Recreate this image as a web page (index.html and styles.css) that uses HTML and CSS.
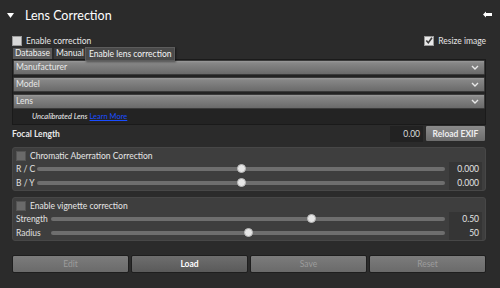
FILE: index.html
```html
<!DOCTYPE html>
<html>
<head>
<meta charset="utf-8">
<link rel="stylesheet" href="styles.css">
</head>
<body>
<div class="panel">
  <header class="title">
    <svg class="caret" width="7" height="5" viewBox="0 0 7 5"><polygon points="0,0 7,0 3.5,5" fill="#fff"/></svg>
    <span class="title-text">Lens Correction</span>
    <svg class="pin" width="9" height="7" viewBox="0 0 9 7"><polygon points="0,3.5 3,0.5 3,2 9,2 9,5 3,5 3,6.5" fill="#fff"/></svg>
  </header>

  <div class="opts">
    <label class="check"><span class="box"></span>Enable correction</label>
    <label class="check"><span class="box on"><svg width="9" height="9" viewBox="0 0 9 9"><polyline points="1.5,4.5 3.7,7 7.8,1.5" fill="none" stroke="#3a3a3a" stroke-width="1.8"/></svg></span>Resize image</label>
  </div>

  <div class="tabs">
    <span class="tab active">Database</span>
    <span class="tab">Manual</span>
    <span class="tooltip">Enable lens correction</span>
  </div>

  <div class="db">
    <div class="select"><span>Manufacturer</span><svg width="8" height="5" viewBox="0 0 8 5"><polyline points="1,1 4,4 7,1" fill="none" stroke="#e8e8e8" stroke-width="1.4"/></svg></div>
    <div class="select"><span>Model</span><svg width="8" height="5" viewBox="0 0 8 5"><polyline points="1,1 4,4 7,1" fill="none" stroke="#e8e8e8" stroke-width="1.4"/></svg></div>
    <div class="select"><span>Lens</span><svg width="8" height="5" viewBox="0 0 8 5"><polyline points="1,1 4,4 7,1" fill="none" stroke="#e8e8e8" stroke-width="1.4"/></svg></div>
    <div class="uncal"><i>Uncalibrated Lens</i><a href="#">Learn More</a></div>
  </div>

  <div class="focal">
    <span class="focal-label">Focal Length</span>
    <span class="spacer"></span>
    <span class="num">0.00</span>
    <span class="btn reload">Reload EXIF</span>
  </div>

  <div class="group">
    <label class="check"><span class="box dark"></span>Chromatic Aberration Correction</label>
    <div class="srow"><span class="slabel">R / C</span><div class="track"><span class="thumb" style="left:50%"></span></div><span class="val">0.000</span></div>
    <div class="srow"><span class="slabel">B / Y</span><div class="track"><span class="thumb" style="left:50%"></span></div><span class="val">0.000</span></div>
  </div>

  <div class="group">
    <label class="check"><span class="box dark"></span>Enable vignette correction</label>
    <div class="srow"><span class="slabel wide">Strength</span><div class="track"><span class="thumb" style="left:66%"></span></div><span class="val">0.50</span></div>
    <div class="srow"><span class="slabel wide">Radius</span><div class="track"><span class="thumb" style="left:50%"></span></div><span class="val">50</span></div>
  </div>

  <div class="buttons">
    <span class="btn big dim">Edit</span>
    <span class="btn big strong">Load</span>
    <span class="btn big dim">Save</span>
    <span class="btn big dim">Reset</span>
  </div>
</div>
</body>
</html>
```

FILE: styles.css
```css
* { box-sizing: border-box; }
html, body { margin: 0; padding: 0; }
body {
  background: #2b2b2b;
  width: 500px;
  height: 288px;
  overflow: hidden;
  font-family: Lato, "Open Sans", sans-serif;
  font-size: 8.5px;
  color: #e6e6e6;
}
.panel {
  padding: 7px 14px 0 12px;
  display: flex;
  flex-direction: column;
}
.title {
  display: flex;
  align-items: center;
  height: 17px;
  margin-left: -5px;
  margin-right: -6px;
}
.caret { margin-right: 11px; }
.title-text { font-size: 12.5px; color: #fff; flex: 1; }
.pin { margin-top: -2px; }

.opts {
  display: flex;
  justify-content: space-between;
  align-items: center;
  margin-top: 10px;
  height: 13px;
}
.check { display: flex; align-items: center; gap: 4px; white-space: nowrap; }
.box {
  width: 10px; height: 10px;
  background: #d8d8d8;
  border: 1px solid #9a9a9a;
  display: inline-flex; align-items: center; justify-content: center;
}
.box.on { background: #e8e8e8; }
.box.dark { background: #6a6a6a; border-color: #555; }

.tabs {
  position: relative;
  display: flex;
  gap: 2px;
  margin-top: 1px;
  height: 11px;
  padding-left: 1px;
}
.tab {
  background: #3a3a3a;
  color: #f0f0f0;
  padding: 0 2px;
  line-height: 11px;
  height: 11px;
}
.tab.active { background: #5a5a5a; }
.tooltip {
  position: absolute;
  left: 73px;
  top: -1px;
  height: 14px;
  line-height: 13px;
  padding: 0 3px;
  background: #4a4a4a;
  border: 1px solid #5c5c5c;
  color: #f4f4f4;
  font-size: 8.5px;
  box-shadow: 1px 1px 2px rgba(0,0,0,0.5);
  z-index: 2;
}

.db {
  background: #232323;
  border: 1px solid #1a1a1a;
  display: flex;
  flex-direction: column;
  gap: 2px;
  padding: 0 0 2px 0;
  height: 66px;
}
.select {
  height: 16px;
  display: flex;
  align-items: center;
  justify-content: space-between;
  padding: 0 5px 0 2px;
  background: linear-gradient(#9a9a9a 0, #878787 2px, #6a6a6a 100%);
  border: 1px solid #3a3a3a;
  border-radius: 1px;
  color: #e8e8e8;
}
.uncal {
  padding-left: 19px;
  font-size: 7.5px;
  color: #eee;
  display: flex;
  gap: 2px;
  align-items: center;
  height: 12px;
}
.uncal a { color: #1a4cff; text-decoration: underline; font-size: 7.5px; }

.focal {
  display: flex;
  align-items: center;
  height: 17px;
  gap: 2px;
}
.focal-label { font-weight: bold; color: #e8e8e8; }
.spacer { flex: 1; }
.num {
  width: 33px; height: 16px;
  background: #222;
  text-align: right;
  line-height: 16px;
  padding-right: 3px;
  color: #ddd;
}
.btn {
  display: flex;
  align-items: center;
  justify-content: center;
  background: linear-gradient(#8a8a8a, #6c6c6c);
  border: 1px solid #2a2a2a;
  border-radius: 2px;
  color: #eee;
}
.reload { width: 61px; height: 17px; font-weight: bold; }

.group {
  margin-top: 5px;
  background: #3e3e3e;
  border: 1px solid #474747;
  border-radius: 3px;
  height: 44px;
  padding: 2px 3px 0 3px;
  display: flex;
  flex-direction: column;
}
.group + .group { margin-top: 6px; }
.group .check { height: 12px; }
.srow {
  display: flex;
  align-items: center;
  height: 15px;
  gap: 4px;
}
.group .check + .srow { margin-top: 0; }
.slabel { width: 17px; flex-shrink: 0; white-space: nowrap; color: #e0e0e0; }
.slabel.wide { width: 31px; }
.track {
  position: relative;
  flex: 1;
  height: 4px;
  background: #6e6e6e;
  border-radius: 2px;
}
.thumb {
  position: absolute;
  top: 50%;
  width: 9px; height: 9px;
  margin: -4.5px 0 0 -4.5px;
  border-radius: 50%;
  background: #e6e6e6;
  border: 1px solid #b8b8b8;
}
.val {
  width: 33px; height: 14px;
  flex-shrink: 0;
  background: #353535;
  text-align: right;
  line-height: 14px;
  padding-right: 3px;
  color: #e4e4e4;
}

.buttons {
  display: flex;
  gap: 2px;
  margin-top: 14px;
}
.btn.big {
  flex: 1;
  height: 18px;
  background: linear-gradient(#7c7c7c, #6a6a6a);
  border: 1px solid #1e1e1e;
}
.btn.dim { color: #9c9c9c; }
.btn.strong { color: #fff; font-weight: bold; background: linear-gradient(#6e6e6e, #5a5a5a); }
```
